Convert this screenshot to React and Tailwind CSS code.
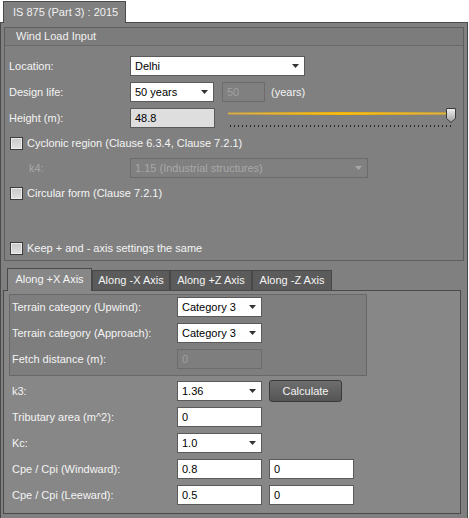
import React from "react";

const Arrow = ({ color = "#333333" }) => (
    <svg className="absolute right-[5px] top-[7px]" width="7" height="4" viewBox="0 0 7 4">
        <path d="M0 0H7L3.5 4Z" fill={color} />
    </svg>
);

const Select = ({ value, w, disabled }) => (
    <div
        className={`relative h-[20px] ${w} shrink-0 border flex items-center pl-[4px] ${
            disabled ? "border-[#6c6c6c] text-[#a8a8a8]" : "border-[#5a5a5a] bg-white text-black"
        }`}
    >
        {value}
        <Arrow color={disabled ? "#a8a8a8" : "#333333"} />
    </div>
);

const Input = ({ value, w, disabled, gray }) => (
    <div
        className={`h-[20px] ${w} shrink-0 border flex items-center pl-[4px] ${
            disabled
                ? "border-[#6c6c6c] text-[#a0a0a0]"
                : gray
                ? "border-[#5a5a5a] bg-[#dedede] text-black"
                : "border-[#5a5a5a] bg-white text-black"
        }`}
    >
        {value}
    </div>
);

const Check = ({ label }) => (
    <div className="h-[20px] flex items-center pl-[1px]">
        <div className="w-[13px] h-[13px] border border-[#3c3c3c] bg-linear-to-b from-[#c8c8c8] to-[#e0e0e0] shadow-[inset_0_0_0_1px_#ececec]" />
        <span className="ml-[4px]">{label}</span>
    </div>
);

const Slider = () => {
    const ticks = [];
    for (let x = 2; x <= 224; x += 4) ticks.push(x);
    return (
        <svg className="ml-[13px] overflow-visible" width="230" height="20" viewBox="0 0 230 20">
            <defs>
                <linearGradient id="gold" x1="0" x2="1" y1="0" y2="0">
                    <stop offset="0" stopColor="#a89060" />
                    <stop offset="0.5" stopColor="#f2b400" />
                    <stop offset="1" stopColor="#b89850" />
                </linearGradient>
                <linearGradient id="thumb" x1="0" x2="0" y1="0" y2="1">
                    <stop offset="0" stopColor="#f2f2f2" />
                    <stop offset="1" stopColor="#9a9a9a" />
                </linearGradient>
            </defs>
            <rect x="0" y="4" width="224" height="3" fill="url(#gold)" />
            <rect x="0" y="5" width="224" height="1" fill="#f7c53a" opacity="0.6" />
            {ticks.map((x) => (
                <rect key={x} x={x} y="17" width="1" height="2" fill="#2a2a2a" />
            ))}
            <path d="M218.5 0.5H227.5V10.5L223 14.5L218.5 10.5Z" fill="url(#thumb)" stroke="#3a3a3a" />
        </svg>
    );
};

const Row = ({ label, lw, children, dim }) => (
    <div className="h-[20px] flex items-center">
        <div className={`${lw} shrink-0 ${dim ? "text-[#a8a8a8] pl-[20px]" : ""}`}>{label}</div>
        {children}
    </div>
);

const tabs = [
    { name: "Along +X Axis", w: "w-[85px]" },
    { name: "Along -X Axis", w: "w-[78px]" },
    { name: "Along +Z Axis", w: "w-[82px]" },
    { name: "Along -Z Axis", w: "w-[80px]" },
];

export default function App() {
    return (
        <div className="w-[469px] h-[518px] overflow-hidden bg-white text-[11px] leading-none text-[#f4f4f4] font-['Liberation_Sans',Arial,sans-serif]">
            {/* top tab */}
            <div className="h-[22px] pl-[3px] pt-[1px] flex items-end">
                <div className="w-[123px] h-[22px] -mb-px relative z-10 border border-b-0 border-[#4a4a4a] bg-[#808080] flex items-center pl-[9px] text-[#f0f0f0]">
                    IS 875 (Part 3) : 2015
                </div>
            </div>

            <div className="w-[468px] h-[497px] border border-[#4a4a4a] bg-[#808080] pt-[4px] pl-[3px] pr-[3px] flex flex-col">
                {/* Wind Load Input group */}
                <div className="border border-[#5e5e5e] flex flex-col">
                    <div className="h-[18px] bg-[#7c7c7c] border-b border-[#6a6a6a] flex items-center pl-[11px] text-[#f0f0f0]">
                        Wind Load Input
                    </div>
                    <div className="pt-[10px] pl-[4px] pb-[2px] flex flex-col">
                        <div className="flex flex-col gap-[6px]">
                            <Row label="Location:" lw="w-[121px]">
                                <Select value="Delhi" w="w-[175px]" />
                            </Row>
                            <Row label="Design life:" lw="w-[121px]">
                                <Select value="50 years" w="w-[84px]" />
                                <div className="ml-[8px]">
                                    <Input value="50" w="w-[43px]" disabled />
                                </div>
                                <span className="ml-[6px]">(years)</span>
                            </Row>
                            <Row label="Height (m):" lw="w-[121px]">
                                <Input value="48.8" w="w-[85px]" gray />
                                <Slider />
                            </Row>
                        </div>
                        <div className="mt-[5px] flex flex-col gap-[5px]">
                            <Check label="Cyclonic region (Clause 6.3.4, Clause 7.2.1)" />
                            <Row label="k4:" lw="w-[121px]" dim>
                                <Select value="1.15 (Industrial structures)" w="w-[238px]" disabled />
                            </Row>
                            <Check label="Circular form (Clause 7.2.1)" />
                        </div>
                        <div className="mt-[35px]">
                            <Check label="Keep + and - axis settings the same" />
                        </div>
                    </div>
                </div>

                {/* axis tabs */}
                <div className="mt-[7px] flex items-end pl-[3px] h-[22px]">
                    {tabs.map((t, i) =>
                        i === 0 ? (
                            <div
                                key={t.name}
                                className={`${t.w} h-[23px] -mb-px relative z-10 border border-b-0 border-[#4a4a4a] bg-[#878787] flex items-center justify-center pb-[2px]`}
                            >
                                {t.name}
                            </div>
                        ) : (
                            <div
                                key={t.name}
                                className={`${t.w} h-[20px] border border-b-0 border-[#474747] bg-[#5b5b5b] flex items-center justify-center`}
                            >
                                {t.name}
                            </div>
                        )
                    )}
                </div>
                <div className="w-[458px] h-[224px] -ml-px border border-[#4a4a4a] bg-[#878787] pt-[3px] pl-[5px] flex flex-col">
                    <div className="w-[358px] border border-[#686868] bg-[#7e7e7e] pt-[2px] pl-[2px] pb-[6px] flex flex-col gap-[6px]">
                        <Row label="Terrain category (Upwind):" lw="w-[165px]">
                            <Select value="Category 3" w="w-[85px]" />
                        </Row>
                        <Row label="Terrain category (Approach):" lw="w-[165px]">
                            <Select value="Category 3" w="w-[85px]" />
                        </Row>
                        <Row label="Fetch distance (m):" lw="w-[165px]">
                            <Input value="0" w="w-[85px]" disabled />
                        </Row>
                    </div>
                    <div className="mt-[5px] pl-[3px] flex flex-col gap-[6px]">
                        <Row label="k3:" lw="w-[165px]">
                            <Select value="1.36" w="w-[85px]" />
                            <button className="ml-[7px] w-[73px] h-[22px] rounded-[3px] border border-[#3a3a3a] bg-linear-to-b from-[#6e6e6e] to-[#555555] text-[#f4f4f4] flex items-center justify-center">
                                Calculate
                            </button>
                        </Row>
                        <Row label="Tributary area (m^2):" lw="w-[165px]">
                            <Input value="0" w="w-[85px]" />
                        </Row>
                        <Row label="Kc:" lw="w-[165px]">
                            <Select value="1.0" w="w-[85px]" />
                        </Row>
                        <Row label="Cpe / Cpi (Windward):" lw="w-[165px]">
                            <Input value="0.8" w="w-[85px]" />
                            <div className="ml-[7px]">
                                <Input value="0" w="w-[85px]" />
                            </div>
                        </Row>
                        <Row label="Cpe / Cpi (Leeward):" lw="w-[165px]">
                            <Input value="0.5" w="w-[85px]" />
                            <div className="ml-[7px]">
                                <Input value="0" w="w-[85px]" />
                            </div>
                        </Row>
                    </div>
                </div>
            </div>
        </div>
    );
}
